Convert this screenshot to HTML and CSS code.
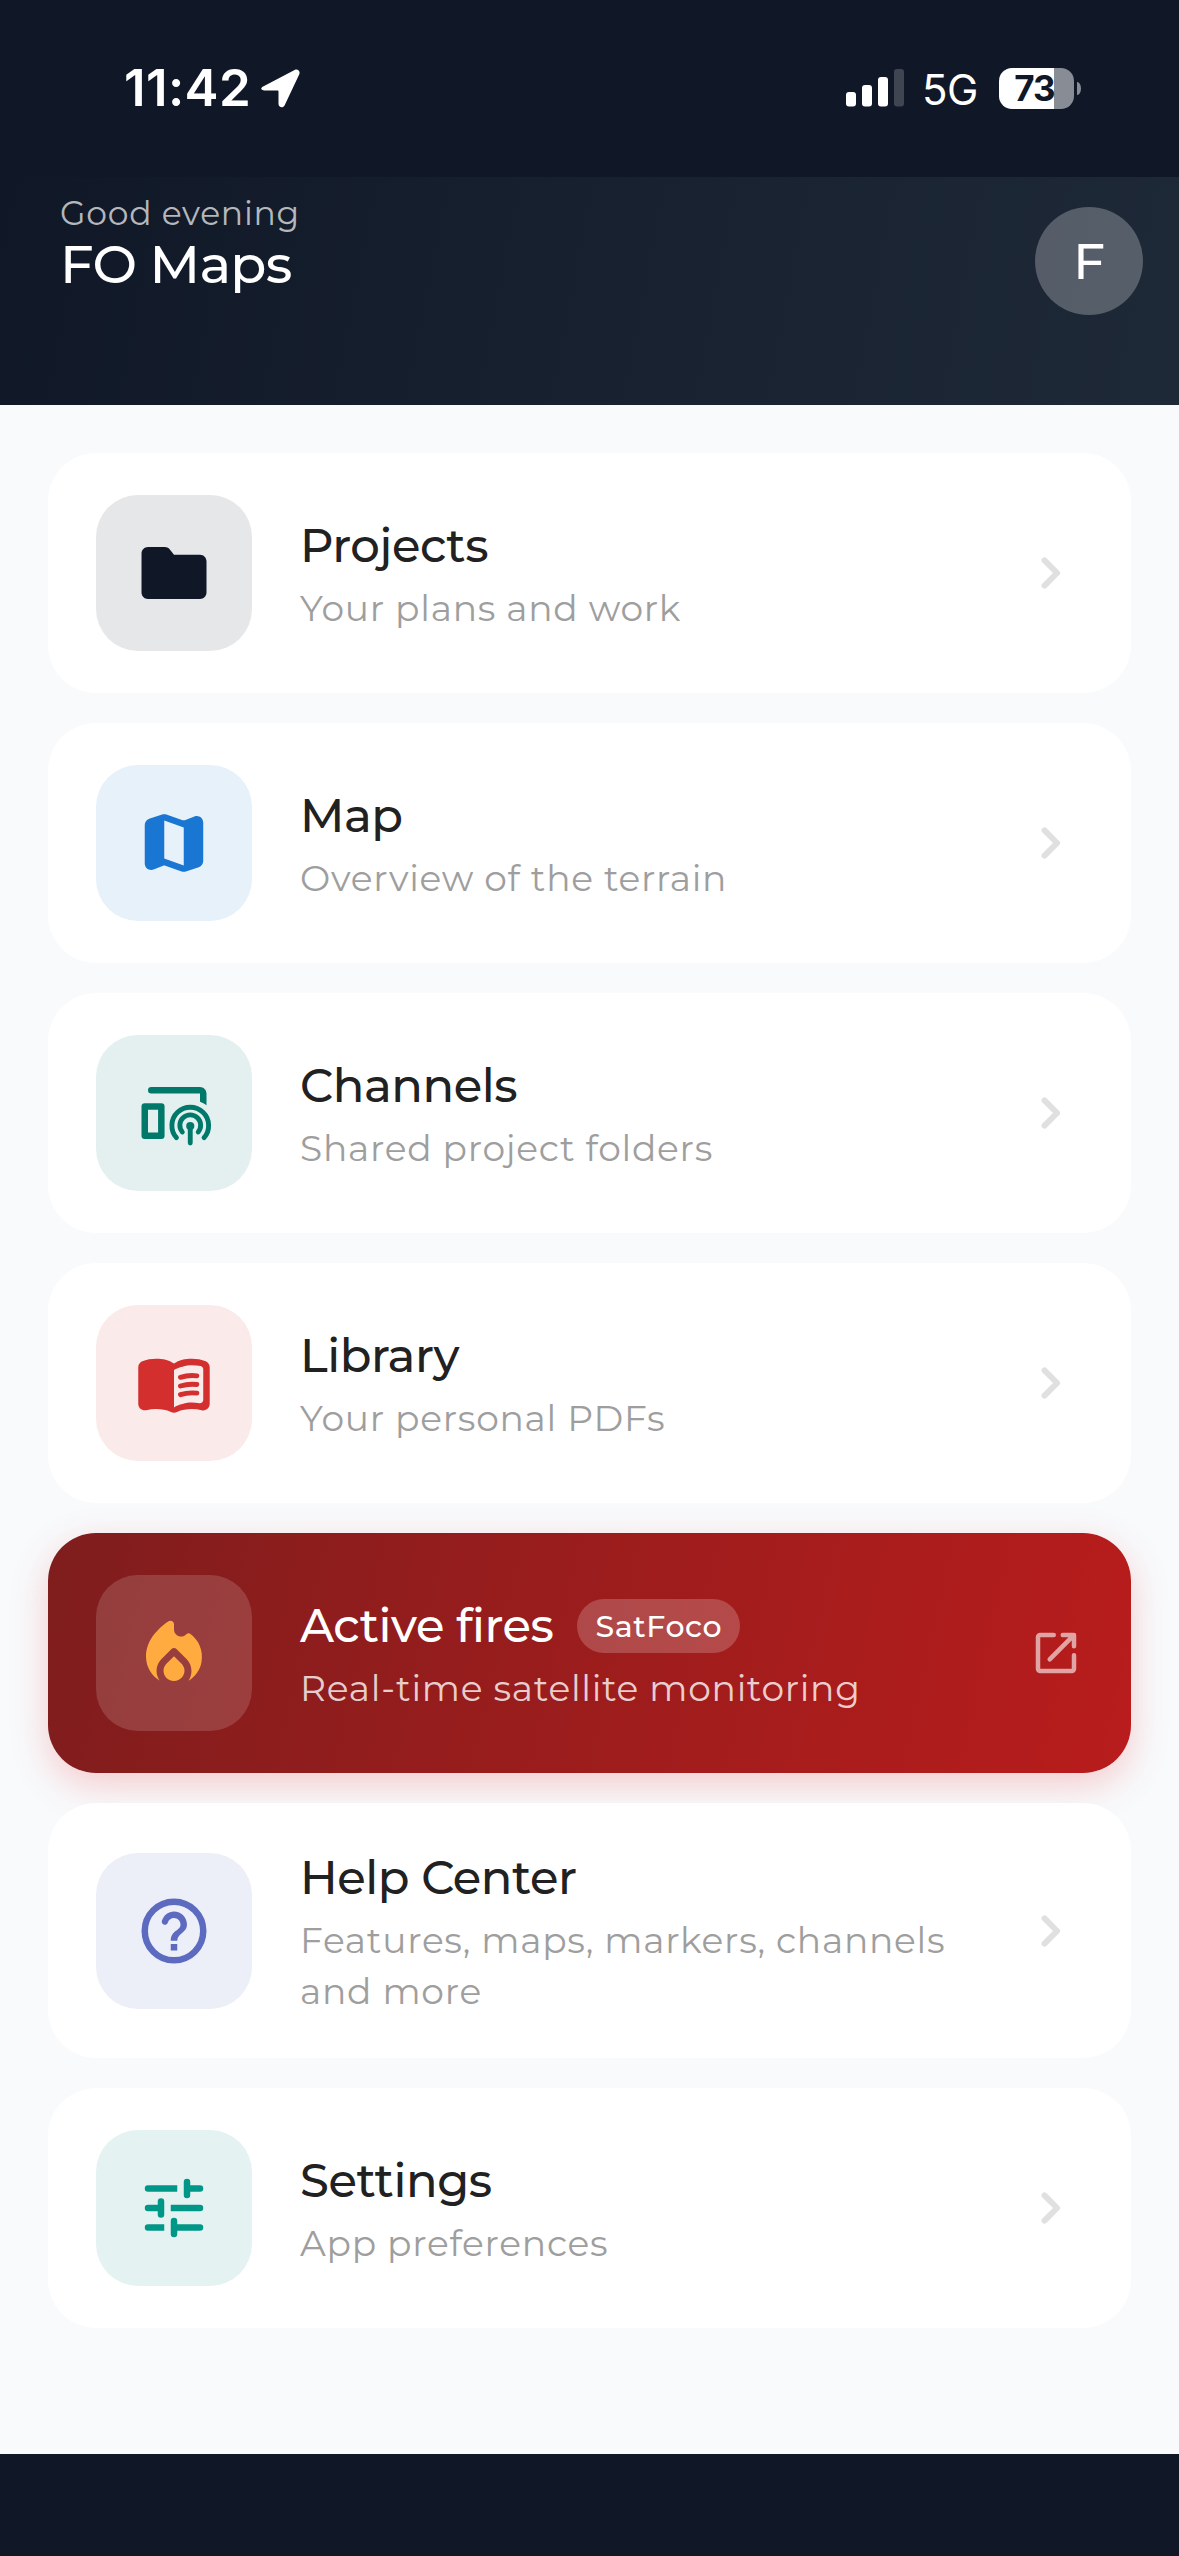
FILE: index.html
```html
<!DOCTYPE html>
<html lang="en">
<head>
<meta charset="utf-8">
<title>FO Maps</title>
<link rel="stylesheet" href="styles.css">
</head>
<body>
<div class="screen">
  <div class="status">
    <div class="status-left">
      <span class="time">11:42</span>
      <svg class="arrow" viewBox="0 0 39 39"><path d="M2.6 17.2 33.6.9c3-1.5 5.8 1 4.8 4L23.8 36c-1.6 3.6-6.3 2.8-6.3-1.2V22.6c0-.8-.4-1.2-1.2-1.2H3.6c-3.9 0-4.6-2.6-1-4.2z"/></svg>
    </div>
    <div class="status-right">
      <svg class="signal" viewBox="0 0 58 38"><rect y="23" width="10" height="14.500" rx="3"/><rect x="16" y="16" width="10" height="21.500" rx="3"/><rect x="32" y="8" width="10" height="29.500" rx="3"/><rect class="dim" x="48" y="0" width="10" height="37.500" rx="3"/></svg>
      <span class="network">5G</span>
      <div class="battery"><span class="cell">73</span><span class="nub"></span></div>
    </div>
  </div>

  <header class="header">
    <div class="greeting">
      <p class="hello">Good evening</p>
      <h1 class="app-name">FO Maps</h1>
    </div>
    <div class="avatar">F</div>
  </header>

  <main class="menu">
    <a class="card">
      <span class="tile projects"><svg viewBox="0 0 24 24"><path d="M10.590 4.590C10.210 4.210 9.700 4 9.170 4H4c-1.100 0-1.990.9-1.990 2L2 18c0 1.100.9 2 2 2h16c1.100 0 2-.9 2-2V8.400c0-1.100-.9-2-2-2h-8l-1.410-1.810z"/></svg></span>
      <span class="text"><span class="title">Projects</span><span class="sub">Your plans and work</span></span>
      <svg class="chevron" viewBox="0 0 24 24"><path d="M10 7.420 14.580 12 10 16.580"/></svg>
    </a>
    <a class="card">
      <span class="tile map"><svg viewBox="0 0 24 24"><path d="M14.650 4.980l-5-1.750c-.42-.15-.88-.15-1.300-.01L4.360 4.560C3.550 4.840 3 5.600 3 6.460v11.850c0 1.410 1.410 2.370 2.720 1.860l2.930-1.140c.22-.09.47-.09.69-.01l5 1.750c.42.15.88.15 1.300.01l3.990-1.340c.81-.27 1.360-1.040 1.360-1.900V5.690c0-1.410-1.410-2.370-2.720-1.860l-2.930 1.140c-.22.08-.46.09-.69.010zM15 18.890l-6-2.110V5.110l6 2.110v11.670z"/></svg></span>
      <span class="text"><span class="title">Map</span><span class="sub">Overview of the terrain</span></span>
      <svg class="chevron" viewBox="0 0 24 24"><path d="M10 7.420 14.580 12 10 16.580"/></svg>
    </a>
    <a class="card">
      <span class="tile channels"><svg viewBox="0 0 24 24"><path d="M5 4h15c1.100 0 2 .9 2 2v3.600a9 9 0 0 0-2-1.100V6H5a1 1 0 0 1 0-2z"/><path fill-rule="evenodd" d="M3 9h5.100a1 1 0 0 1 1 1v9a1 1 0 0 1-1 1H3a1 1 0 0 1-1-1v-9a1 1 0 0 1 1-1zm1 2v7h3.100v-7z"/><g class="line"><path d="M12.750 19.600a5.650 5.650 0 1 1 8.500 0"/><path d="M14.550 17.850a3.200 3.200 0 1 1 4.900 0"/><path d="M17 16v5.250"/></g><circle cx="17" cy="16" r="1.250"/></svg></span>
      <span class="text"><span class="title">Channels</span><span class="sub">Shared project folders</span></span>
      <svg class="chevron" viewBox="0 0 24 24"><path d="M10 7.420 14.580 12 10 16.580"/></svg>
    </a>
    <a class="card">
      <span class="tile library"><svg viewBox="0 0 24 24"><path fill-rule="evenodd" d="M17.500 4.500c-1.950 0-4.050.4-5.500 1.500-1.450-1.100-3.550-1.500-5.500-1.500-1.450 0-2.990.22-4.280.79C1.490 5.620 1 6.330 1 7.140v11.280c0 1.300 1.220 2.260 2.480 1.940.98-.25 2.020-.36 3.020-.36 1.560 0 3.220.26 4.560.92.6.3 1.280.3 1.870 0 1.340-.67 3-.92 4.560-.92 1 0 2.040.11 3.020.36 1.260.33 2.480-.63 2.480-1.940V7.140c0-.81-.49-1.520-1.220-1.850-1.280-.57-2.820-.79-4.270-.79zM21 17.230c0 .63-.58 1.090-1.200.98-.75-.14-1.530-.2-2.300-.2-1.700 0-4.150.65-5.500 1.500V8c1.350-.85 3.800-1.500 5.500-1.500.92 0 1.830.09 2.700.28.46.1.8.51.8.98v9.470z"/><g class="line"><path d="M13.980 10.260c1.600-.5 3.500-.65 5.050-.46M13.980 12.920c1.600-.5 3.500-.65 5.050-.46M13.980 15.580c1.600-.5 3.500-.65 5.050-.46"/></g></svg></span>
      <span class="text"><span class="title">Library</span><span class="sub">Your personal PDFs</span></span>
      <svg class="chevron" viewBox="0 0 24 24"><path d="M10 7.420 14.580 12 10 16.580"/></svg>
    </a>
    <a class="card alert">
      <span class="tile fires"><svg viewBox="0 0 24 24"><path d="M12 12.900l-2.030 2c-.46.46-.82 1.030-.93 1.670C8.740 18.410 10.180 20 12 20s3.260-1.590 2.960-3.420c-.11-.64-.46-1.220-.93-1.670L12 12.900zM15.560 6.550C14.380 8.020 12 7.190 12 5.300V3.770c0-.8-.89-1.280-1.550-.84C8.120 4.490 4 7.970 4 13c0 2.920 1.560 5.470 3.890 6.860-.7-.99-1.040-2.250-.81-3.590.17-1.010.7-1.930 1.430-2.650l2.790-2.740c.39-.38 1.010-.38 1.400 0l2.730 2.690c.74.73 1.300 1.650 1.480 2.680.25 1.360-.07 2.640-.77 3.660 1.890-1.150 3.290-3.060 3.710-5.300.61-3.270-.81-6.370-3.220-8.100-.33-.25-.8-.2-1.070.13z"/></svg></span>
      <span class="text"><span class="title">Active fires<span class="badge">SatFoco</span></span><span class="sub">Real-time satellite monitoring</span></span>
      <svg class="external" viewBox="0 0 24 24"><path d="M11 4H5a1 1 0 0 0-1 1v14a1 1 0 0 0 1 1h14a1 1 0 0 0 1-1v-6M15 4h5v5M19.600 4.400 9.200 14.800"/></svg>
    </a>
    <a class="card">
      <span class="tile help"><svg viewBox="0 0 24 24"><circle class="ring" cx="12" cy="12" r="9"/><path d="M11 16h2v2h-2zM8.300 8.800C8.850 7.150 10.250 6 12 6c2.200 0 4 1.800 4 4 0 2.500-3 2.750-3 5h-2c0-3.250 3-3 3-5 0-1.100-.9-2-2-2-.88 0-1.600.55-1.870 1.350-.2.550-.67.83-1.200.700-.6-.15-.83-.7-.63-1.250z"/></svg></span>
      <span class="text"><span class="title">Help Center</span><span class="sub">Features, maps, markers, channels and more</span></span>
      <svg class="chevron" viewBox="0 0 24 24"><path d="M10 7.420 14.580 12 10 16.580"/></svg>
    </a>
    <a class="card">
      <span class="tile settings"><svg viewBox="0 0 24 24"><path d="M4 5h9v2H4a1 1 0 0 1 0-2zM16 3a1 1 0 0 1 1 1v1h3a1 1 0 0 1 0 2h-3v1a1 1 0 0 1-2 0V4a1 1 0 0 1 1-1zM8 9a1 1 0 0 1 1 1v4a1 1 0 0 1-2 0v-1H4a1 1 0 0 1 0-2h3v-1a1 1 0 0 1 1-1zM11 11h9a1 1 0 0 1 0 2h-9zM4 17h5v2H4a1 1 0 0 1 0-2zM12 15a1 1 0 0 1 1 1v1h7a1 1 0 0 1 0 2h-7v1a1 1 0 0 1-2 0v-4a1 1 0 0 1 1-1z"/></svg></span>
      <span class="text"><span class="title">Settings</span><span class="sub">App preferences</span></span>
      <svg class="chevron" viewBox="0 0 24 24"><path d="M10 7.420 14.580 12 10 16.580"/></svg>
    </a>
  </main>
  <div class="bottom"></div>
</div>
</body>
</html>
```
FILE: styles.css
```css
* { box-sizing: border-box; margin: 0; padding: 0; }

body {
  background: #111827;
  font-family: Montserrat, Lato, "Open Sans", sans-serif;
}

.screen {
  display: flex;
  flex-direction: column;
  width: 1179px;
  height: 2556px;
  overflow: hidden;
}

/* Status bar */
.status {
  display: flex;
  justify-content: space-between;
  flex: none;
  height: 177px;
  padding: 67px 98px 0 124px;
  background: #101726;
  color: #fff;
  font-family: Inter, "Liberation Sans", sans-serif;
}

.status-left, .status-right { display: flex; height: 42px; align-items: center; }
.time { width: 126px; font-size: 51px; font-weight: 600; line-height: 42px; letter-spacing: .4px; white-space: nowrap; }
.arrow { width: 39px; height: 39px; margin-left: 11px; fill: #fff; }
.signal { width: 58px; height: 38px; fill: #fff; }
.dim { opacity: .2; }
.network { width: 56px; margin: 3px 21px 0 18px; font-size: 42px; font-weight: 400; line-height: 42px; letter-spacing: -.5px; white-space: nowrap; }
.battery { display: flex; align-items: center; gap: 3px; height: 41px; }

.cell {
  width: 75px;
  height: 41px;
  padding-right: 4px;
  border-radius: 13px;
  background: linear-gradient(90deg, #fff 55px, #888c94 55px);
  color: #101726;
  font-size: 35px;
  font-weight: 700;
  line-height: 41px;
  letter-spacing: -1px;
  text-align: center;
}

.nub { width: 4px; height: 13px; border-radius: 0 4px 4px 0 / 0 7px 7px 0; background: #888c94; }

/* Header */
.header {
  display: flex;
  justify-content: space-between;
  align-items: flex-start;
  flex: none;
  height: 228px;
  padding: 15px 36px 0 60px;
  background: linear-gradient(101deg, #101827, #1e2938);
  color: #fff;
}

.hello { color: rgba(255, 255, 255, .7); font-size: 33px; line-height: 43px; letter-spacing: .75px; }
.app-name { font-size: 53px; font-weight: 500; line-height: 59px; letter-spacing: -.8px; }

.avatar {
  width: 108px;
  height: 108px;
  margin-top: 15px;
  border-radius: 50%;
  background: rgba(255, 255, 255, .25);
  font-size: 50px;
  font-weight: 500;
  line-height: 110px;
  text-align: center;
}

/* Menu */
.menu {
  display: flex;
  flex-direction: column;
  gap: 30px;
  flex: none;
  height: 2049px;
  padding: 48px;
  background: #f8fafc;
}

.card {
  display: flex;
  align-items: center;
  flex: none;
  position: relative;
  padding: 42px 48px;
  border-radius: 48px;
  background: #fff;
}

.tile {
  display: flex;
  align-items: center;
  justify-content: center;
  flex: none;
  width: 156px;
  height: 156px;
  border-radius: 42px;
}

.tile svg { width: 78px; height: 78px; fill: currentColor; }
.line { fill: none; stroke: currentColor; stroke-width: 1.500; stroke-linecap: round; }
.ring { fill: none; stroke: currentColor; stroke-width: 2; }

.projects { background: #e5e7e9; color: #101726; }
.map { background: #e6f1fa; color: #1976d2; }
.channels { background: #e4f0ef; color: #00796b; }
.library { background: #faeaea; color: #d32f2f; }
.fires { background: rgba(255, 255, 255, .15); color: #ffab40; }
.help { background: #eceff7; color: #5c6bc0; }
.settings { background: #e4f3f2; color: #009688; }
.tile.fires svg { width: 84px; height: 84px; }

.text { display: flex; flex-direction: column; flex: 1; gap: 5px; margin: 0 36px -1px 48px; padding-top: 1px; }
.title { display: flex; align-items: center; color: #212121; font-size: 46.500px; font-weight: 500; line-height: 64px; letter-spacing: -.45px; }
.sub { color: #9e9e9e; font-size: 36px; line-height: 51px; letter-spacing: .75px; }

.chevron { flex: none; width: 66px; height: 66px; fill: none; stroke: #e0e0e0; stroke-width: 2.150; stroke-linecap: round; stroke-linejoin: round; }

/* Highlighted entry */
.alert {
  background: linear-gradient(102.500deg, #7f1d1d, #b91c1c);
  box-shadow: 0 12px 36px rgba(239, 68, 68, .25);
}

.alert .title { color: #fff; }
.alert .sub { color: rgba(255, 255, 255, .8); }
.external { flex: none; width: 54px; height: 54px; fill: none; stroke: rgba(255, 255, 255, .6); stroke-width: 2; stroke-linecap: round; stroke-linejoin: round; }

.badge {
  height: 54px;
  margin-left: 24px;
  padding: 0 18px;
  border-radius: 27px;
  background: rgba(255, 255, 255, .2);
  font-size: 30px;
  line-height: 55px;
  letter-spacing: .6px;
}

.bottom { flex: 1; background: #101726; }
```
